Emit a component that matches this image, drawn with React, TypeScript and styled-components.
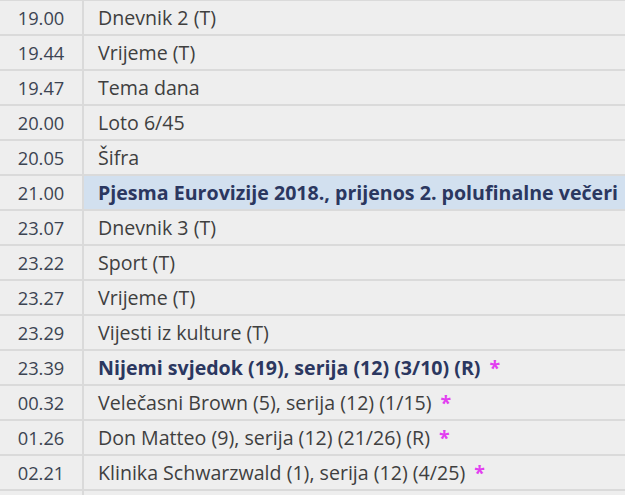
import React from "react";
import styled, { createGlobalStyle } from "styled-components";

const Global = createGlobalStyle`
  html, body { margin: 0; padding: 0; background: #eeeeee; overflow: hidden; }
  body { font-family: "Open Sans", "Noto Sans", sans-serif; }
`;

const Table = styled.table`
  width: 100%;
  border-collapse: collapse;
  margin-top: -1px;
`;

const Row = styled.tr`
  height: 35px;
  border-top: 2px solid #dadada;
`;

const TimeCell = styled.td`
  width: 83px;
  padding: 0;
  box-sizing: border-box;
  text-align: center;
  font-size: 18.3px;
  color: #3c4452;
  border-right: 2px solid #dadada;
  vertical-align: middle;
`;

const TitleCell = styled.td<{ $highlight?: boolean; $bold?: boolean }>`
  padding: 0 0 0 14px;
  font-size: 19.6px;
  white-space: nowrap;
  vertical-align: middle;
  color: ${(p) => (p.$bold ? "#2b3760" : "#3f3f3f")};
  font-weight: ${(p) => (p.$bold ? 700 : 400)};
  background: ${(p) => (p.$highlight ? "#d2e0ef" : "transparent")};
`;

const Star = styled.span`
  color: #e23ef0;
  font-weight: 700;
  margin-left: 9px;
`;

type Item = { time: string; title: string; bold?: boolean; hl?: boolean; star?: boolean };

const items: Item[] = [
  { time: "19.00", title: "Dnevnik 2 (T)" },
  { time: "19.44", title: "Vrijeme (T)" },
  { time: "19.47", title: "Tema dana" },
  { time: "20.00", title: "Loto 6/45" },
  { time: "20.05", title: "Šifra" },
  { time: "21.00", title: "Pjesma Eurovizije 2018., prijenos 2. polufinalne večeri", bold: true, hl: true },
  { time: "23.07", title: "Dnevnik 3 (T)" },
  { time: "23.22", title: "Sport (T)" },
  { time: "23.27", title: "Vrijeme (T)" },
  { time: "23.29", title: "Vijesti iz kulture (T)" },
  { time: "23.39", title: "Nijemi svjedok (19), serija (12) (3/10) (R)", bold: true, star: true },
  { time: "00.32", title: "Velečasni Brown (5), serija (12) (1/15)", star: true },
  { time: "01.26", title: "Don Matteo (9), serija (12) (21/26) (R)", star: true },
  { time: "02.21", title: "Klinika Schwarzwald (1), serija (12) (4/25)", star: true },
  { time: "", title: "" },
];

export default function App() {
  return (
    <>
      <Global />
      <Table>
        <tbody>
          {items.map((it, i) => (
            <Row key={i}>
              <TimeCell>{it.time}</TimeCell>
              <TitleCell $bold={it.bold} $highlight={it.hl}>
                {it.title}
                {it.star && <Star>*</Star>}
              </TitleCell>
            </Row>
          ))}
        </tbody>
      </Table>
    </>
  );
}
